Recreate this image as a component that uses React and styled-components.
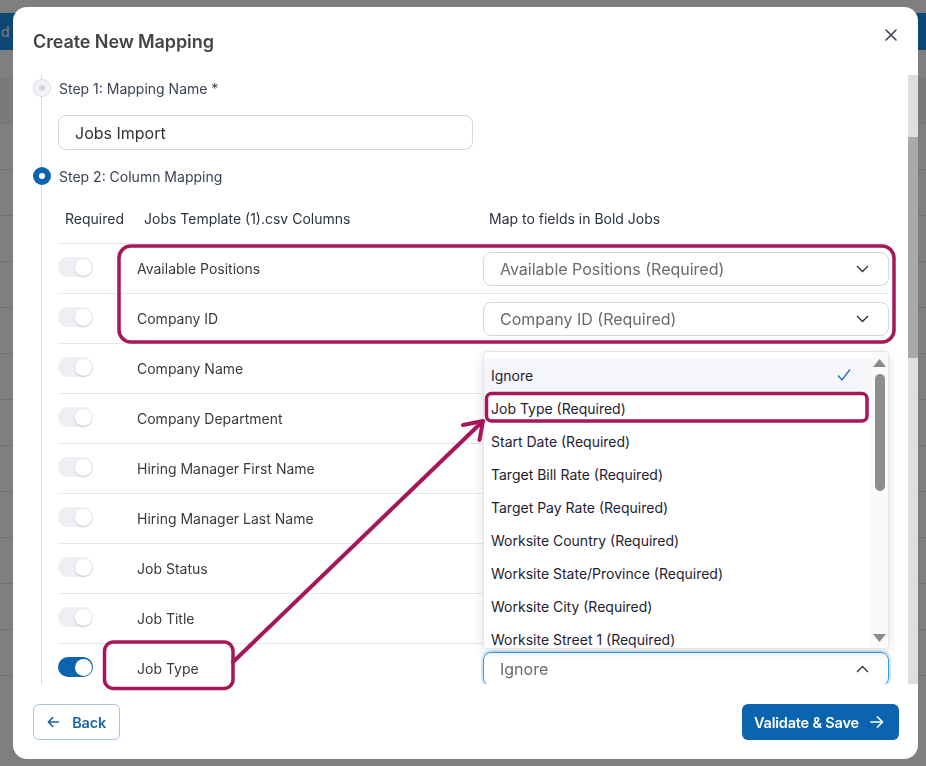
import React from "react";
import styled, { createGlobalStyle, css } from "styled-components";

const GlobalStyle = createGlobalStyle`
  html, body { margin: 0; padding: 0; }
  body { font-family: Inter, "Noto Sans", sans-serif; background: #fff; overflow: hidden; }
  * { box-sizing: border-box; }
`;

const MAGENTA = "#a6175a";
const BLUE = "#0b64ad";

/* ---------- page behind the dialog ---------- */
const Page = styled.div`
  width: 926px;
  height: 766px;
  background: #fff;
  display: flex;
  flex-direction: column;
`;
const PageBar = styled.div`
  display: flex;
  justify-content: space-between;
  padding-top: 13px;
`;
const PageButton = styled.div`
  height: 37px;
  background: #1790e8;
  color: #fff;
  font-size: 14px;
  display: flex;
  align-items: center;
  padding: ${(p) => (p.$left ? "0 8px 0 1px" : "0 12px")};
`;
const PageRows = styled.div`
  margin-top: 28px;
  display: flex;
  flex-direction: column;
`;
const PageRow = styled.div`
  height: 46px;
  border-bottom: 1px solid #e4e4e4;
  background: ${(p) => (p.$shade ? "#f4f4f4" : "#fff")};
`;

/* ---------- overlay + dialog ---------- */
const Overlay = styled.div`
  position: fixed;
  inset: 0;
  background: rgba(0, 0, 0, 0.5);
  display: flex;
  padding: 7px 8px 7px 13px;
`;
const Modal = styled.div`
  flex: 1;
  position: relative;
  background: #fff;
  border-radius: 14px;
  display: flex;
  flex-direction: column;
  overflow: hidden;
`;
const Header = styled.div`
  height: 68px;
  display: flex;
  justify-content: space-between;
  align-items: center;
  padding: 0 21px 0 20px;
`;
const Title = styled.h2`
  margin: 0;
  font-size: 18px;
  font-weight: 600;
  color: #444;
  letter-spacing: -0.1px;
`;
const CloseButton = styled.div`
  align-self: flex-start;
  margin-top: 22px;
  width: 12px;
  height: 12px;
  display: flex;
`;

const Body = styled.div`
  height: 609px;
  display: flex;
`;
const Content = styled.div`
  flex: 1;
  overflow: hidden;
  padding: 4px 20px 0 20px;
`;
const ScrollTrack = styled.div`
  width: 10px;
  background: #dedede;
  display: flex;
  flex-direction: column;
`;
const ScrollThumb = styled.div`
  margin-top: 62px;
  height: 221px;
  background: #a9a9a9;
`;

const Steps = styled.div`
  position: relative;
  &::before {
    content: "";
    position: absolute;
    left: 8px;
    top: -4px;
    bottom: 0;
    width: 1px;
    background: #d9dae1;
  }
`;
const StepHead = styled.div`
  display: flex;
  align-items: center;
  gap: 8px;
  height: 18px;
`;
const StepDot = styled.div`
  position: relative;
  z-index: 1;
  width: 18px;
  height: 18px;
  border-radius: 50%;
  display: flex;
  align-items: center;
  justify-content: center;
  ${(p) =>
    p.$active
      ? css`
          background: ${BLUE};
          &::after { content: ""; width: 6px; height: 6px; border-radius: 50%; background: #fff; }
        `
      : css`
          background: #f2f3f6;
          border: 1px solid #dcdde4;
          &::after { content: ""; width: 6px; height: 6px; border-radius: 50%; background: #d3d5dc; }
        `}
`;
const StepLabel = styled.div`
  font-size: 14px;
  color: #3b4254;
`;
const StepBody = styled.div`
  padding-left: 25px;
  margin-top: ${(p) => p.$top}px;
  margin-bottom: ${(p) => p.$bottom || 0}px;
`;
const NameInput = styled.input`
  width: 415px;
  height: 35px;
  border: 1px solid #d4d5de;
  border-radius: 8px;
  padding: 0 16px;
  font-family: inherit;
  font-size: 16px;
  color: #333;
  outline: none;
`;

/* ---------- table ---------- */
const Table = styled.div`
  width: 831px;
  display: flex;
  flex-direction: column;
`;
const gridCols = css`
  display: grid;
  grid-template-columns: 79px 346px 1fr;
  align-items: center;
`;
const HeadRow = styled.div`
  ${gridCols};
  height: 49px;
  padding-bottom: 1px;
  font-size: 14px;
  color: #2d3240;
`;
const HeadCell = styled.div`
  padding-left: ${(p) => p.$pad ?? 7}px;
`;
const Row = styled.div`
  ${gridCols};
  height: 50px;
  border-top: 1px solid #e7e8ec;
`;
const RowLabel = styled.div`
  font-size: 14px;
  color: #3a3a3a;
`;
const SelectCell = styled.div`
  position: relative;
  min-height: 34px;
`;
const Toggle = styled.div`
  width: 35px;
  height: 20px;
  border-radius: 10px;
  display: flex;
  align-items: center;
  justify-content: flex-end;
  padding: 0 1px;
  margin-top: -3px;
  background: ${(p) => (p.$on ? BLUE : "#eeeff3")};
  &::after {
    content: "";
    width: 17px;
    height: 17px;
    border-radius: 50%;
    background: #fff;
    box-shadow: ${(p) => (p.$on ? "none" : "0 1px 2px rgba(0,0,0,0.18)")};
  }
`;
const Select = styled.div`
  height: 34px;
  border: 1px solid #d6d7de;
  border-radius: 8px;
  padding: 0 19px 0 16px;
  display: flex;
  align-items: center;
  justify-content: space-between;
  font-size: 16px;
  color: #6a6a6a;
  ${(p) =>
    p.$focused &&
    css`
      border-color: #3199e2;
      box-shadow: 0 0 0 2px rgba(49, 153, 226, 0.22);
    `}
`;

/* ---------- dropdown menu ---------- */
const Menu = styled.div`
  position: absolute;
  left: 0;
  right: 0;
  bottom: calc(100% + 3px);
  height: 298px;
  background: #fff;
  border: 1px solid #e4e5e9;
  border-radius: 4px;
  box-shadow: 0 3px 12px rgba(0, 0, 0, 0.12);
  display: flex;
  overflow: hidden;
  z-index: 5;
`;
const MenuList = styled.div`
  flex: 1;
  padding-top: 7px;
  overflow: hidden;
`;
const MenuItem = styled.div`
  height: 33px;
  display: flex;
  align-items: center;
  justify-content: space-between;
  padding: 0 20px 0 7px;
  font-size: 14px;
  color: #1e2230;
  background: ${(p) => (p.$selected ? "#f4f6f9" : "#fff")};
`;
const MenuScroll = styled.div`
  width: 17px;
  background: #fafafa;
  display: flex;
  flex-direction: column;
  align-items: center;
  padding: 7px 0 6px;
`;
const MenuThumb = styled.div`
  width: 10px;
  height: 117px;
  border-radius: 5px;
  background: #8d8d8d;
  margin-top: 7px;
`;
const Spacer = styled.div`
  flex: 1;
`;

/* ---------- footer ---------- */
const Footer = styled.div`
  display: flex;
  justify-content: space-between;
  align-items: flex-start;
  padding: 20px 19px 0 20px;
  flex: 1;
`;
const Button = styled.div`
  height: 36px;
  border-radius: 6px;
  display: flex;
  align-items: center;
  font-size: 14.5px;
  font-weight: 600;
  letter-spacing: -0.2px;
  ${(p) =>
    p.$primary
      ? css`
          width: 157px;
          background: ${BLUE};
          color: #fff;
          padding: 0 12px;
          gap: 11px;
        `
      : css`
          width: 87px;
          background: #fff;
          color: #1b63a5;
          border: 1px solid #a9c4e3;
          padding: 0 13px;
          gap: 13px;
        `}
`;

/* ---------- annotation layer ---------- */
const Annotations = styled.svg`
  position: absolute;
  inset: 0;
  width: 100%;
  height: 100%;
  pointer-events: none;
  z-index: 10;
`;

const Chevron = ({ up }) => (
  <svg width="13" height="8" viewBox="0 0 13 8">
    <path
      d={up ? "M1 7 L6.5 1.5 L12 7" : "M1 1 L6.5 6.5 L12 1"}
      fill="none"
      stroke="#2b2f3a"
      strokeWidth="1.3"
    />
  </svg>
);

const Arrow = ({ left, color }) => (
  <svg width="14" height="12" viewBox="0 0 14 12">
    <path
      d={left ? "M13 6 H1.5 M6.5 1 L1.5 6 L6.5 11" : "M1 6 H12.5 M7.5 1 L12.5 6 L7.5 11"}
      fill="none"
      stroke={color}
      strokeWidth="1.7"
      strokeLinecap="round"
      strokeLinejoin="round"
    />
  </svg>
);

const rows = [
  "Available Positions",
  "Company ID",
  "Company Name",
  "Company Department",
  "Hiring Manager First Name",
  "Hiring Manager Last Name",
  "Job Status",
  "Job Title",
  "Job Type",
];

const rowValue = {
  "Available Positions": "Available Positions (Required)",
  "Company ID": "Company ID (Required)",
  "Job Type": "Ignore",
};

const options = [
  "Ignore",
  "Job Type (Required)",
  "Start Date (Required)",
  "Target Bill Rate (Required)",
  "Target Pay Rate (Required)",
  "Worksite Country (Required)",
  "Worksite State/Province (Required)",
  "Worksite City (Required)",
  "Worksite Street 1 (Required)",
];

export default function App() {
  return (
    <>
      <GlobalStyle />
      <Page>
        <PageBar>
          <PageButton $left>d</PageButton>
          <PageButton>Add</PageButton>
        </PageBar>
        <PageRows>
          {Array.from({ length: 13 }).map((_, i) => (
            <PageRow key={i} $shade={i === 0} />
          ))}
        </PageRows>
      </Page>

      <Overlay>
        <Modal>
          <Header>
            <Title>Create New Mapping</Title>
            <CloseButton>
              <svg width="12" height="12" viewBox="0 0 12 12">
                <path d="M1 1 L11 11 M11 1 L1 11" stroke="#3b4259" strokeWidth="1.6" strokeLinecap="round" />
              </svg>
            </CloseButton>
          </Header>

          <Body>
            <Content>
              <Steps>
                <StepHead>
                  <StepDot />
                  <StepLabel>Step 1: Mapping Name *</StepLabel>
                </StepHead>
                <StepBody $top={18} $bottom={17}>
                  <NameInput defaultValue="Jobs Import" readOnly />
                </StepBody>

                <StepHead>
                  <StepDot $active />
                  <StepLabel>Step 2: Column Mapping</StepLabel>
                </StepHead>
                <StepBody $top={9}>
                  <Table>
                    <HeadRow>
                      <HeadCell>Required</HeadCell>
                      <HeadCell>Jobs Template (1).csv Columns</HeadCell>
                      <HeadCell $pad={6}>Map to fields in Bold Jobs</HeadCell>
                    </HeadRow>
                    {rows.map((name, i) => {
                      const last = i === rows.length - 1;
                      const value = rowValue[name];
                      return (
                        <Row key={name}>
                          <Toggle $on={last} />
                          <RowLabel>{name}</RowLabel>
                          <SelectCell>
                            {value && (
                              <Select $focused={last}>
                                <span>{value}</span>
                                <Chevron up={last} />
                              </Select>
                            )}
                            {last && (
                              <Menu>
                                <MenuList>
                                  {options.map((o, j) => (
                                    <MenuItem key={o} $selected={j === 0}>
                                      <span>{o}</span>
                                      {j === 0 && (
                                        <svg width="14" height="14" viewBox="0 0 14 14">
                                          <path d="M1 7.5 L5 12 L13 1.5" fill="none" stroke="#2273c7" strokeWidth="1.4" />
                                        </svg>
                                      )}
                                    </MenuItem>
                                  ))}
                                </MenuList>
                                <MenuScroll>
                                  <svg width="13" height="8" viewBox="0 0 13 8">
                                    <path d="M6.5 0 L13 8 H0 Z" fill="#8a8a8a" />
                                  </svg>
                                  <MenuThumb />
                                  <Spacer />
                                  <svg width="13" height="8" viewBox="0 0 13 8">
                                    <path d="M0 0 H13 L6.5 8 Z" fill="#8a8a8a" />
                                  </svg>
                                </MenuScroll>
                              </Menu>
                            )}
                          </SelectCell>
                        </Row>
                      );
                    })}
                  </Table>
                </StepBody>
              </Steps>
            </Content>
            <ScrollTrack>
              <ScrollThumb />
            </ScrollTrack>
          </Body>

          <Footer>
            <Button>
              <Arrow left color="#1b63a5" />
              Back
            </Button>
            <Button $primary>
              Validate &amp; Save
              <Arrow color="#fff" />
            </Button>
          </Footer>

          <Annotations viewBox="0 0 905 752">
            <g fill="none" stroke={MAGENTA} strokeWidth="3.5" strokeLinecap="round" strokeLinejoin="round">
              <rect x="106" y="239" width="775" height="96" rx="12" />
              <rect x="473.5" y="386.5" width="380.5" height="27.5" rx="5" />
              <rect x="91.5" y="635" width="128.5" height="46.5" rx="9" />
              <path d="M220 655 L470 414" strokeWidth="4" />
              <path d="M450 418 L470 414 L466.5 433" strokeWidth="4" />
            </g>
          </Annotations>
        </Modal>
      </Overlay>
    </>
  );
}
